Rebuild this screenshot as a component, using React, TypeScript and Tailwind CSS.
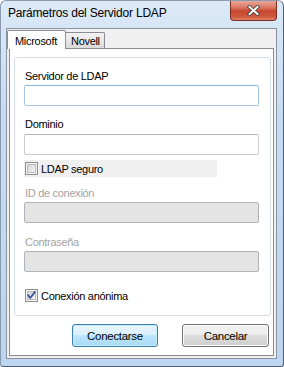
import React from 'react'

function CheckBox({ checked }: { checked?: boolean }) {
  return (
    <svg width="13" height="13" viewBox="0 0 13 13" className="shrink-0">
      <defs>
        <linearGradient id={checked ? 'cbg1' : 'cbg0'} x1="0" y1="0" x2="1" y2="1">
          <stop offset="0" stopColor="#cfd2d6" />
          <stop offset="1" stopColor="#f7f7f7" />
        </linearGradient>
      </defs>
      <rect x="0.5" y="0.5" width="12" height="12" fill="#f4f4f4" stroke="#8f8f8f" />
      <rect x="2.5" y="2.5" width="8" height="8" fill={`url(#${checked ? 'cbg1' : 'cbg0'})`} stroke="#b9bcc1" />
      {checked && (
        <path d="M3.2 6.3 L5.3 8.8 L9.8 3.2" fill="none" stroke="#3c5a96" strokeWidth="1.9" strokeLinecap="square" />
      )}
    </svg>
  )
}

function Label({ children, disabled }: { children: React.ReactNode; disabled?: boolean }) {
  return (
    <div className={`ml-[1px] h-[14px] leading-[14px] ${disabled ? 'text-[#a3a3a3]' : 'text-black'}`}>{children}</div>
  )
}

export default function App() {
  return (
    <div className="w-[284px] h-[367px] flex flex-col overflow-hidden rounded-t-[6px] rounded-b-[3px] border border-[#8a9aae] border-r-[#4e5e72] border-b-[#4e5e72] bg-[linear-gradient(to_bottom,#dce9f7,#c6dcf3_30%,#bcd6f1)] font-['Liberation_Sans',Arial,sans-serif] text-[11px] tracking-[-0.3px]">

      {/* Title bar */}
      <div className="h-[27px] flex justify-between shrink-0">
        <div className="pl-[7px] pt-[5px] text-[12px] leading-[15px] tracking-[-0.2px] text-black">Parámetros del Servidor LDAP</div>
        <div className="-mt-px mr-[6px] w-[47px] h-[21px] flex items-center justify-center rounded-b-[4px] border border-t-0 border-[#7a2e21] bg-[linear-gradient(to_bottom,#eab0a2_0%,#d9735e_40%,#c7462f_55%,#cf5a40_85%,#e0856b_100%)]">
          <svg width="13" height="11" viewBox="0 0 13 11">
            <path d="M2.5 2 L10.5 9 M10.5 2 L2.5 9" stroke="#3b3b3b" strokeWidth="3.6" strokeLinecap="square" />
            <path d="M2.5 2 L10.5 9 M10.5 2 L2.5 9" stroke="#ffffff" strokeWidth="2" strokeLinecap="square" />
          </svg>
        </div>
      </div>

      {/* Client area */}
      <div className="ml-[5px] mr-[6px] mb-[7px] h-[331px] border border-[#8a939f] bg-[#f0f0f0] flex flex-col pt-[1px] pb-[2px]">

        {/* Tabs */}
        <div className="flex items-end shrink-0">
          <div className="relative z-10 -mb-px w-[59px] h-[19px] border border-b-0 border-[#898c95] bg-white rounded-t-[2px] pl-[7px] pt-[3px] leading-[14px] text-black">Microsoft</div>
          <div className="w-[39px] h-[16px] border border-l-0 border-b-0 border-[#898c95] bg-[linear-gradient(to_bottom,#f3f3f3,#e8e8e8_50%,#dadada)] rounded-tr-[2px] pl-[5px] pt-[1px] leading-[14px] text-black">Novell</div>
        </div>

        {/* Tab page */}
        <div className="mx-[2px] flex-1 border border-[#898c95] bg-white flex flex-col">

          {/* Group */}
          <div className="mt-[8px] ml-[4px] mr-[2px] h-[259px] border border-[#d5dfe5] rounded-[3px] pt-[11px] pl-[9px] pr-[11px] flex flex-col">
            <Label>Servidor de LDAP</Label>
            <div className="mt-[2px] h-[21px] rounded-[2px] border border-[#a4c6e6] border-t-[#8fb4dc] bg-white" />

            <div className="mt-[11px]"><Label>Dominio</Label></div>
            <div className="mt-[3px] h-[21px] rounded-[2px] border border-[#c9cbcf] border-t-[#b3b6bb] bg-white" />

            <div className="mt-[5px] w-[193px] h-[17px] bg-[#f0f0f0] flex items-center pl-[1px] gap-[3px]">
              <CheckBox />
              <span className="pt-px leading-[14px] text-black">LDAP seguro</span>
            </div>

            <div className="mt-[9px]"><Label disabled>ID de conexión</Label></div>
            <div className="mt-[2px] h-[21px] rounded-[2px] border border-[#b0b3b7] bg-[#e4e4e4]" />

            <div className="mt-[12px]"><Label disabled>Contraseña</Label></div>
            <div className="mt-[2px] h-[21px] rounded-[2px] border border-[#b0b3b7] bg-[#e4e4e4]" />

            <div className="mt-[15px] h-[17px] flex items-center pl-[1px] gap-[3px]">
              <CheckBox checked />
              <span className="pt-px leading-[14px] text-black">Conexión anónima</span>
            </div>
          </div>

          {/* Buttons */}
          <div className="mt-[8px] flex justify-end gap-[24px] pr-[4px]">
            <button className="w-[86px] h-[23px] rounded-[3px] border border-[#3c7fb1] shadow-[inset_0_0_0_1px_#c6ecfc] bg-[linear-gradient(to_bottom,#eaf6fd_0%,#d9f0fc_50%,#bee6fd_50%,#a7d9f5_100%)] text-black text-[11.5px] leading-[14px]">Conectarse</button>
            <button className="w-[87px] h-[23px] rounded-[3px] border border-[#707070] shadow-[inset_0_0_0_1px_#fcfcfc] bg-[linear-gradient(to_bottom,#f2f2f2_0%,#ebebeb_50%,#dddddd_50%,#cfcfcf_100%)] text-black text-[11.5px] leading-[14px]">Cancelar</button>
          </div>
        </div>
      </div>
    </div>
  )
}
